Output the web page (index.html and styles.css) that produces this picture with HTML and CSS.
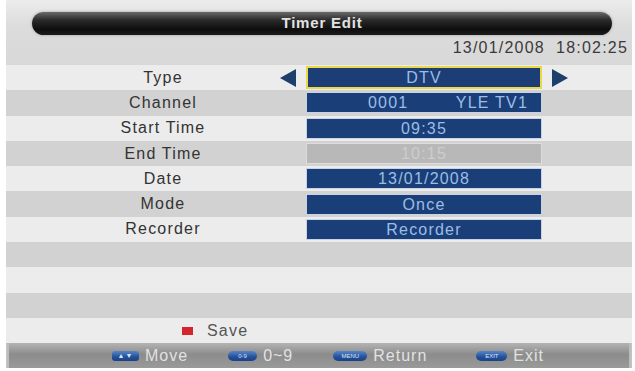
FILE: index.html
```html
<!DOCTYPE html>
<html lang="en">
<head>
    <meta charset="UTF-8">
    <title>Timer Edit</title>
    <link rel="stylesheet" href="styles.css">
</head>
<body>
    <div class="screen">
        <div class="header">
            <div class="title-bar">Timer Edit</div>
            <div class="clock">13/01/2008&nbsp;&nbsp;18:02:25</div>
        </div>

        <div class="rows">
            <div class="row light">
                <div class="label">Type</div>
                <div class="arrow arrow-left"></div>
                <div class="value selected">DTV</div>
                <div class="arrow arrow-right"></div>
            </div>
            <div class="row dark">
                <div class="label">Channel</div>
                <div></div>
                <div class="value split"><span>0001</span><span>YLE TV1</span></div>
            </div>
            <div class="row light">
                <div class="label">Start Time</div>
                <div></div>
                <div class="value">09:35</div>
            </div>
            <div class="row dark">
                <div class="label">End Time</div>
                <div></div>
                <div class="value disabled">10:15</div>
            </div>
            <div class="row light">
                <div class="label">Date</div>
                <div></div>
                <div class="value">13/01/2008</div>
            </div>
            <div class="row dark">
                <div class="label">Mode</div>
                <div></div>
                <div class="value">Once</div>
            </div>
            <div class="row light">
                <div class="label">Recorder</div>
                <div></div>
                <div class="value">Recorder</div>
            </div>
            <div class="row dark"></div>
            <div class="row light"></div>
            <div class="row dark"></div>
            <div class="row light save-row">
                <span class="red-key"></span>
                <span class="save-text">Save</span>
            </div>
        </div>

        <div class="footer">
            <div class="hint hint-move">
                <span class="key key-arrows">&#9650;&#9660;</span>
                <span class="hint-text">Move</span>
            </div>
            <div class="hint hint-num">
                <span class="key key-num">0-9</span>
                <span class="hint-text">0~9</span>
            </div>
            <div class="hint hint-menu">
                <span class="key key-menu">MENU</span>
                <span class="hint-text">Return</span>
            </div>
            <div class="hint hint-exit">
                <span class="key key-exit">EXIT</span>
                <span class="hint-text">Exit</span>
            </div>
        </div>
    </div>
</body>
</html>
```

FILE: styles.css
```css
body {
    margin: 0;
    padding: 0;
    background: #fff;
    font-family: "Liberation Sans", Arial, sans-serif;
}

.screen {
    margin-left: 6px;
    width: 626px;
    height: 368px;
    background: #dadada;
    display: flex;
    flex-direction: column;
}

.header {
    height: 65px;
    background: linear-gradient(to bottom, #ececec 0%, #dcdcdc 40%, #d8d8d8 100%);
    display: flex;
    flex-direction: column;
}

.title-bar {
    margin: 12px 20px 0 26px;
    height: 23px;
    border-radius: 12px;
    background: linear-gradient(to bottom, #6a6a6a 0%, #2a2a2a 35%, #0e0e0e 75%, #1c1c1c 100%);
    color: #e2e2e2;
    font-size: 15px;
    font-weight: bold;
    letter-spacing: 0.8px;
    line-height: 21px;
    text-align: center;
    box-shadow: 0 0 3px rgba(0, 0, 0, 0.3);
}

.clock {
    margin-top: 3px;
    padding-right: 4px;
    text-align: right;
    font-size: 16px;
    letter-spacing: 1.2px;
    color: #3a3a3a;
    line-height: 19px;
}

.rows {
    display: flex;
    flex-direction: column;
}

.row {
    height: 25.3px;
    display: grid;
    grid-template-columns: 182px 42px 236px 26px;
    column-gap: 5px;
    padding-left: 66px;
    align-items: center;
}

.light {
    background: #ececec;
}

.dark {
    background: #d2d2d2;
}

.label {
    text-align: center;
    font-size: 16px;
    letter-spacing: 1.2px;
    color: #333;
}

.arrow {
    width: 0;
    height: 0;
    border-top: 9px solid transparent;
    border-bottom: 9px solid transparent;
}

.arrow-left {
    justify-self: end;
    margin-right: 5px;
    border-right: 16px solid #1d3f6c;
}

.arrow-right {
    justify-self: start;
    margin-left: 5px;
    border-left: 16px solid #1d3f6c;
}

.value {
    height: 19px;
    background: #1a3f78;
    border: 1px solid #c8d4e6;
    color: #9cbde6;
    font-size: 16px;
    letter-spacing: 1.2px;
    line-height: 19px;
    text-align: center;
}

.value.selected {
    border: 2px solid #e8d94a;
    background: #1c3d76;
}

.value.split {
    display: flex;
    justify-content: space-between;
    padding: 0 13px 0 61px;
}

.value.disabled {
    background: #b8b8b8;
    border-color: #dcdcdc;
    color: #cdcdcd;
}

.save-row {
    display: flex;
    align-items: center;
    padding-left: 176px;
}

.red-key {
    width: 11px;
    height: 8px;
    background: #d4252a;
    margin-right: 9px;
}

.save-text {
    font-size: 16px;
    letter-spacing: 1.2px;
    color: #555;
}

.footer {
    flex: 1;
    background: linear-gradient(to bottom, #b4b4b4 0%, #8c8c8c 45%, #9a9a9a 100%);
    display: flex;
    align-items: center;
    border-left: 1px solid #c4c4c4;
    border-right: 1px solid #c4c4c4;
    box-shadow: inset 32px 0 0 -30px #bdbdbd, inset -32px 0 0 -30px #bdbdbd;
}

.hint {
    display: flex;
    align-items: center;
}

.hint-move {
    margin-left: 105px;
}

.hint-num {
    margin-left: 40px;
}

.hint-menu {
    margin-left: 40px;
}

.hint-exit {
    margin-left: 49px;
}

.key {
    height: 10px;
    border-radius: 5px;
    background: linear-gradient(to bottom, #5a86c8 0%, #22509a 60%, #1b4385 100%);
    color: #d8e4f4;
    font-size: 6px;
    line-height: 10px;
    text-align: center;
    margin-right: 6px;
}

.key-arrows {
    width: 27px;
    border-radius: 3px;
    font-size: 7px;
    letter-spacing: 1px;
}

.key-num {
    width: 29px;
}

.key-menu {
    width: 34px;
}

.key-exit {
    width: 31px;
}

.hint-text {
    font-size: 16px;
    letter-spacing: 1px;
    color: #e2e2e2;
}
```
